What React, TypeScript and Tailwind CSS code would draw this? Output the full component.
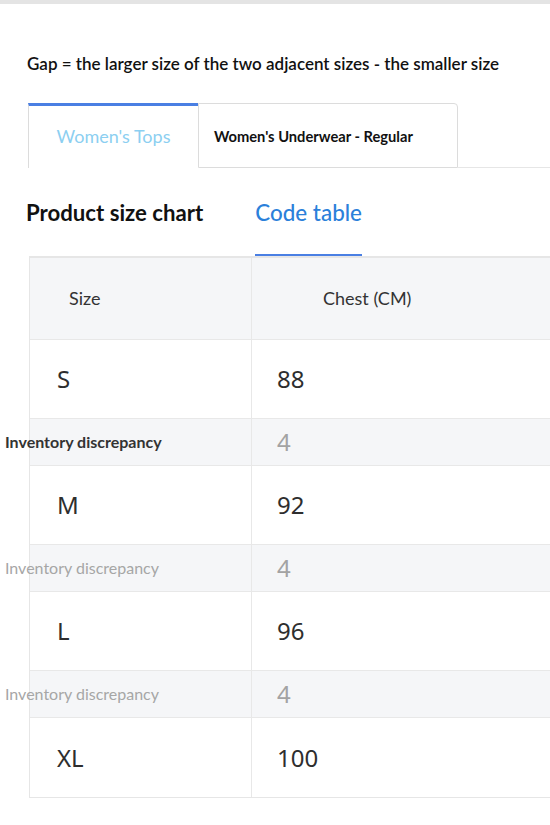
import React from "react";

const rows = [
  { size: "S", chest: "88" },
  { size: "M", chest: "92" },
  { size: "L", chest: "96" },
  { size: "XL", chest: "100" },
];

export default function App() {
  return (
    <div className="w-[550px] h-[825px] overflow-hidden bg-white font-['Lato',sans-serif] text-[#111]">
      <div className="h-[4px] bg-[#e4e4e4]" />
      <p className="mt-[49px] ml-[27px] h-[22px] leading-[22px] text-[17px] font-semibold text-[#111] whitespace-nowrap">
        Gap = the larger size of the two adjacent sizes - the smaller size
      </p>

      <div className="mt-[28px] flex pl-[28px]">
        <div className="w-[170px] h-[65px] border-t-[3px] border-l border-t-[#4a7fe3] border-l-[#dcdcdc] flex items-center justify-center pb-[1px] text-[18px] text-[#8ccff1]">
          Women's Tops
        </div>
        <div className="w-[260px] h-[65px] border border-[#dcdcdc] rounded-tr-[4px] flex items-center pl-[15px] pt-[1px] text-[14.7px] font-bold text-[#111]">
          Women's Underwear - Regular
        </div>
        <div className="flex-1 h-[65px] border-b border-[#e6e6e6]" />
      </div>

      <div className="mt-[31px] flex ml-[26px] items-end">
        <div className="pb-[27px] border-b-2 border-transparent leading-[28px] text-[22.2px] font-bold text-[#111]">
          Product size chart
        </div>
        <div className="ml-[52px] pb-[27px] border-b-2 border-[#4a7fe3] leading-[28px] text-[22.4px] font-medium text-[#2b80da]">
          Code table
        </div>
      </div>

      <div className="ml-[29px] w-[620px] border-t-2 border-l border-b border-[#e6e6e6]">
        <div className="grid grid-cols-[222px_1fr] bg-[#f5f6f8] h-[82px] border-b border-[#e8e8e8]">
          <div className="flex items-center pl-[39px] text-[18px] text-[#333] border-r border-[#e8e8e8]">Size</div>
          <div className="flex items-center pl-[71px] text-[18px] text-[#333]">Chest (CM)</div>
        </div>
        {rows.map((r, i) => (
          <React.Fragment key={r.size}>
            <div className={`grid grid-cols-[222px_1fr] h-[79px] bg-white ${i < rows.length - 1 ? "border-b border-[#e8e8e8]" : ""}`}>
              <div className="flex items-center pl-[27px] font-['Noto_Sans',sans-serif] text-[24px] text-[#2e2e2e] border-r border-[#e8e8e8]">
                {r.size}
              </div>
              <div className="flex items-center pl-[25px] font-['Noto_Sans',sans-serif] text-[24px] text-[#2e2e2e]">
                {r.chest}
              </div>
            </div>
            {i < rows.length - 1 && (
              <div className="grid grid-cols-[222px_1fr] h-[47px] bg-[#f5f6f8] border-b border-[#e8e8e8]">
                <div className="flex items-center border-r border-[#e8e8e8]">
                  <span
                    className={`-ml-[25px] whitespace-nowrap text-[16px] ${
                      i === 0 ? "font-bold text-[#333]" : "text-[#a6a6a6]"
                    }`}
                  >
                    Inventory discrepancy
                  </span>
                </div>
                <div className="flex items-center pl-[25px] font-['Noto_Sans',sans-serif] text-[24px] text-[#a3a3a3]">
                  4
                </div>
              </div>
            )}
          </React.Fragment>
        ))}
      </div>
    </div>
  );
}
